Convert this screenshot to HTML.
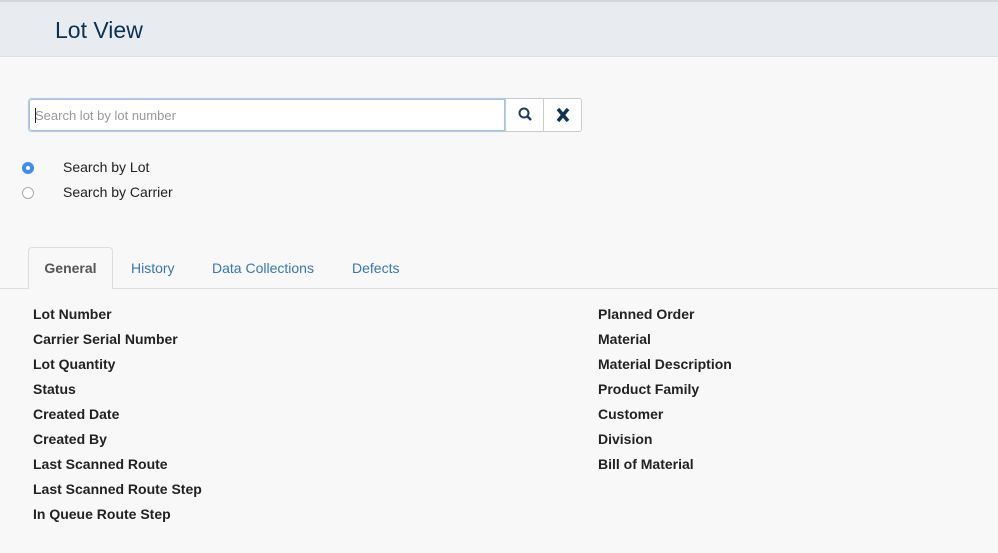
<!DOCTYPE html>
<html><head><style>
body{margin:0;width:998px;height:553px;background:#f8f8f8;font-family:"Liberation Sans",sans-serif;position:relative;overflow:hidden}
.hdr{position:absolute;top:0;left:0;width:998px;height:57px;background:#e8ecf1;border-top:2px solid #d4d6d9;border-bottom:1px solid #dde1e6;box-sizing:border-box}
.hdr h1{position:absolute;left:55px;top:15px;margin:0;font-weight:normal;font-size:23px;color:#0b3154}
.search{position:absolute;left:28px;top:98px;width:554px;height:34px;border:1px solid #c8ccd0;border-radius:3px;background:#fff;box-sizing:border-box}
.search .inp{position:absolute;left:0;top:0;width:476px;height:32px;border:1px solid #9fc3e6;border-radius:3px 0 0 3px;box-shadow:0 0 2px #a8c8ea;box-sizing:border-box;font-size:13px;color:#999;line-height:31px;padding-left:5px}
.search .inp:before{content:"";position:absolute;left:5px;top:8px;width:1px;height:15px;background:#222}
.btn{position:absolute;top:0;height:32px;width:38px;border-left:1px solid #ccc}
.rad{position:absolute;left:22px;width:12px;height:12px;border-radius:50%;box-sizing:border-box}
.lbl{position:absolute;left:63px;font-size:14px;color:#222}
.tabs{position:absolute;left:0;top:288px;width:998px;border-top:1px solid #ddd}
.tab{position:absolute;font-size:14px;color:#3677b7}
.gen{position:absolute;left:28px;top:247px;width:85px;height:42px;background:#f8f8f8;border:1px solid #ddd;border-bottom:none;border-radius:4px 4px 0 0;box-sizing:border-box;font-size:14px;font-weight:bold;color:#555;text-align:center;line-height:41px}
.f{position:absolute;font-size:14px;font-weight:bold;color:#222}
</style></head><body>
<div class="hdr"><h1>Lot View</h1></div>
<div class="search"><div class="inp">Search lot by lot number</div>
<div class="btn" style="left:476px"><svg width="38" height="32"><circle cx="18" cy="14" r="4.5" fill="none" stroke="#1c3e66" stroke-width="2"/><line x1="21" y1="17" x2="25" y2="21" stroke="#1c3e66" stroke-width="2.5"/></svg></div>
<div class="btn" style="left:514px"><svg width="38" height="32"><path d="M14 10L24 22M24 10L14 22" stroke="#0b3154" stroke-width="3.5"/></svg></div>
</div>
<div class="rad" style="top:162px;background:#3d8ef0"><div style="position:absolute;left:4px;top:4px;width:4px;height:4px;border-radius:50%;background:#fff"></div></div>
<div class="lbl" style="top:159px">Search by Lot</div>
<div class="rad" style="top:187px;border:1px solid #aaa;background:#fff"></div>
<div class="lbl" style="top:184px">Search by Carrier</div>
<div class="tabs"></div>
<div class="gen">General</div>
<div class="tab" style="left:131px;top:260px">History</div>
<div class="tab" style="left:212px;top:260px">Data Collections</div>
<div class="tab" style="left:352px;top:260px">Defects</div>
<div class="f" style="left:33px;top:306px">Lot Number</div>
<div class="f" style="left:33px;top:331px">Carrier Serial Number</div>
<div class="f" style="left:33px;top:356px">Lot Quantity</div>
<div class="f" style="left:33px;top:381px">Status</div>
<div class="f" style="left:33px;top:406px">Created Date</div>
<div class="f" style="left:33px;top:431px">Created By</div>
<div class="f" style="left:33px;top:456px">Last Scanned Route</div>
<div class="f" style="left:33px;top:481px">Last Scanned Route Step</div>
<div class="f" style="left:33px;top:506px">In Queue Route Step</div>
<div class="f" style="left:598px;top:306px">Planned Order</div>
<div class="f" style="left:598px;top:331px">Material</div>
<div class="f" style="left:598px;top:356px">Material Description</div>
<div class="f" style="left:598px;top:381px">Product Family</div>
<div class="f" style="left:598px;top:406px">Customer</div>
<div class="f" style="left:598px;top:431px">Division</div>
<div class="f" style="left:598px;top:456px">Bill of Material</div>
</body></html>
